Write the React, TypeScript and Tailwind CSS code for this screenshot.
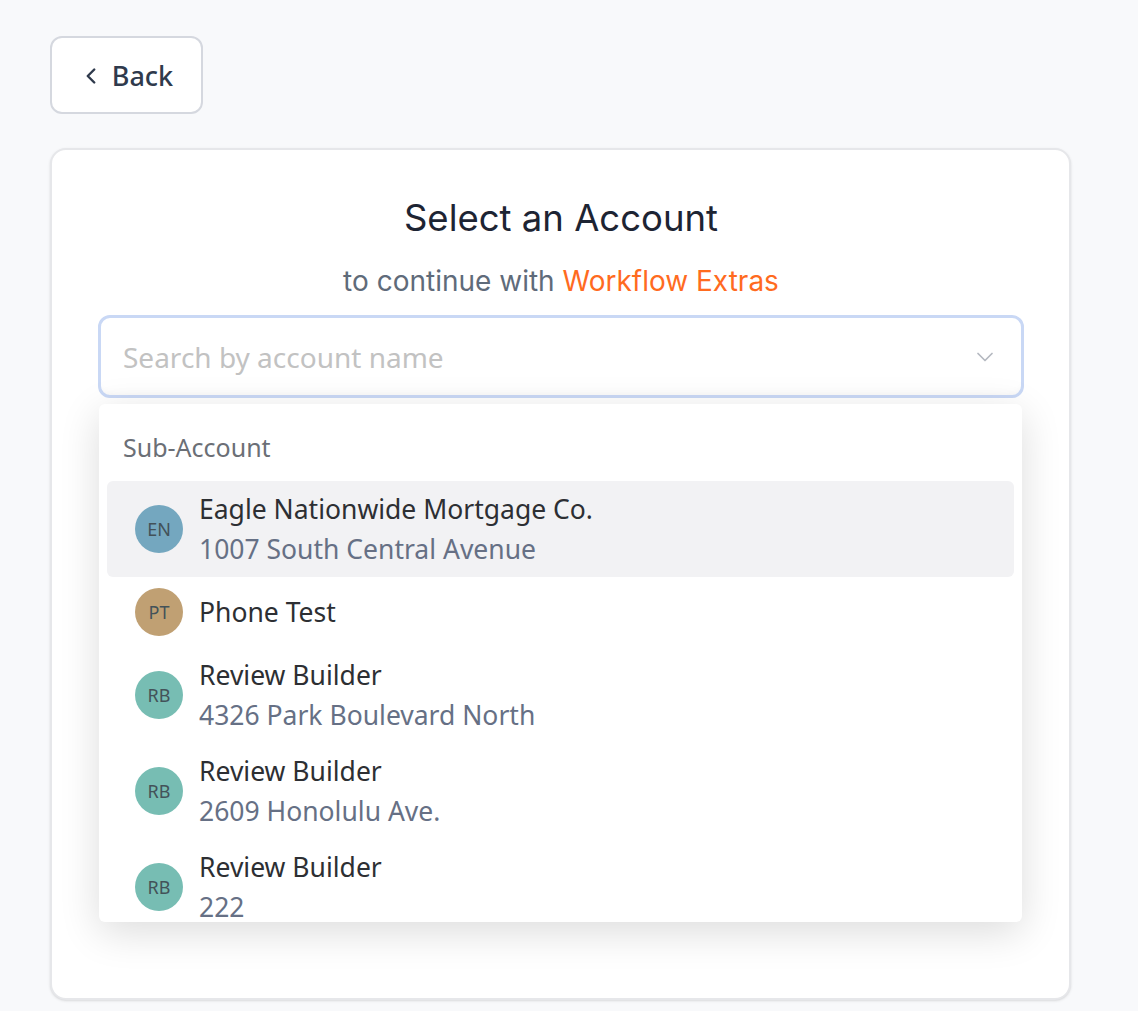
import { ChevronLeft, ChevronDown } from 'lucide-react'

type Account = {
    initials: string
    name: string
    address?: string
    color: string
}

const accounts: Account[] = [
    { initials: 'EN', name: 'Eagle Nationwide Mortgage Co.', address: '1007 South Central Avenue', color: 'bg-[#74a7bf]' },
    { initials: 'PT', name: 'Phone Test', color: 'bg-[#c0a073]' },
    { initials: 'RB', name: 'Review Builder', address: '4326 Park Boulevard North', color: 'bg-[#77bdb3]' },
    { initials: 'RB', name: 'Review Builder', address: '2609 Honolulu Ave.', color: 'bg-[#77bdb3]' },
    { initials: 'RB', name: 'Review Builder', address: '222', color: 'bg-[#77bdb3]' },
]

const uiFont = "font-['Segoe_UI','Noto_Sans','Open_Sans',sans-serif]"

function AccountRow({ account, active }: { account: Account; active: boolean }) {
    return (
        <li
            className={`flex items-center gap-[16px] rounded-md px-7 ${
                account.address ? 'h-[96px]' : 'h-[70px]'
            } ${active ? 'bg-[#f2f2f4]' : ''}`}
        >
            <span
                className={`flex h-12 w-12 shrink-0 items-center justify-center rounded-full text-[18px] text-[#435259] ${account.color}`}
            >
                {account.initials}
            </span>
            <div className="flex flex-col">
                <span className="text-[26.5px] leading-[40px] text-[#2d2f33]">{account.name}</span>
                {account.address ? (
                    <span className="text-[26.5px] leading-[40px] text-[#667085]">{account.address}</span>
                ) : null}
            </div>
        </li>
    )
}

export default function App() {
    return (
        <div className={`min-h-screen bg-[#f8f9fb] pl-[50px] pt-[36px] ${uiFont}`}>
            <button className="flex h-[78px] w-[153px] items-center justify-center gap-[8px] rounded-xl border-2 border-[#d5d8df] bg-white pr-[2px] pt-[2px] text-[27px] font-medium text-[#2f3a4c]">
                <ChevronLeft className="h-[26px] w-[26px]" strokeWidth={2.25} />
                Back
            </button>

            <div className="mt-[34px] h-[852px] w-[1021px] rounded-2xl border-2 border-[#e6e7ea] bg-white pl-[46px] pr-[45px] pt-[44px] shadow-sm">
                <h1 className="text-center font-['Inter',sans-serif] text-[36.5px] font-normal leading-[48px] text-[#1d2433]">
                    Select an Account
                </h1>
                <p className="mt-[21px] text-center font-['Inter',sans-serif] text-[28px] leading-[36px] text-[#5f6b7a]">
                    to continue with <span className="text-[#ff6b1f]">Workflow Extras</span>
                </p>

                <div className="relative mt-[16px]">
                    <div className="flex h-[83px] items-center justify-between rounded-xl border-[3px] border-[#c9d8f5] bg-white pl-[22px] pr-[22px] shadow-[inset_0_-8px_10px_-8px_rgba(0,0,0,0.05)]">
                        <span className="text-[28px] text-[#c2c2c2]">Search by account name</span>
                        <ChevronDown className="h-7 w-7 text-[#b5b9c0]" strokeWidth={1.5} />
                    </div>

                    <div className="absolute left-[1px] right-[2px] top-[89px] z-10 h-[518px] overflow-hidden rounded-md bg-white shadow-[0_10px_40px_rgba(0,0,0,0.14)]">
                        <div className="px-6 pb-[17px] pt-[26px] text-[25px] leading-[34px] text-[#6b6f76]">
                            Sub-Account
                        </div>
                        <ul className="px-2">
                            {accounts.map((a, i) => (
                                <AccountRow key={i} account={a} active={i === 0} />
                            ))}
                        </ul>
                    </div>
                </div>
            </div>
        </div>
    )
}
